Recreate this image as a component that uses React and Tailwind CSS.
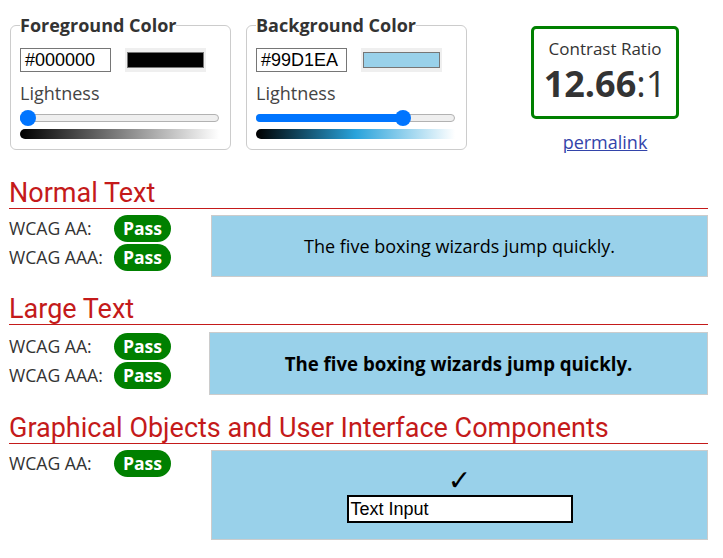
import React from 'react';

const sans = { fontFamily: '"Open Sans", sans-serif' };

const ColorBox = ({ title, hex, swatch, value, gradient }) => {
  const pct = value / 100;
  return (
    <fieldset className="w-[221px] border border-[#cccccc] rounded-[6px] pl-[9px] pr-[11px] pb-[10px]">
      <legend className="text-[18px] leading-[23px] font-bold text-[#333]">{title}</legend>
      <div className="flex items-center mt-[11px] h-[24px]">
        <div className="w-[91px] h-[24px] border border-[#767676] px-[4px] text-[18px] leading-[22px] text-black" style={{ fontFamily: '"Liberation Sans", Arial, sans-serif' }}>
          {hex}
        </div>
        <div className="ml-[14px] w-[81px] h-[24px] bg-[#efefef] flex items-center justify-center">
          <div className="w-[77px] h-[16px] border border-[#767676]" style={{ background: swatch }} />
        </div>
      </div>
      <div className="mt-[9px] text-[18px] leading-[24px] text-[#444]">Lightness</div>
      <div className="relative mt-[5px] h-[16px]">
        <div className="absolute left-0 right-0 top-[4px] h-[8px] rounded-full bg-[#efefef] border border-[#b2b2b2]" />
        <div className="absolute left-0 top-[4px] h-[8px] rounded-full bg-[#0075ff]" style={{ width: `calc(8px + (100% - 16px) * ${pct})` }} />
        <div className="absolute top-0 w-[16px] h-[16px] rounded-full bg-[#0075ff]" style={{ left: `calc((100% - 16px) * ${pct})` }} />
      </div>
      <div className="mt-[3px] h-[10px] rounded-l-[5px]" style={{ background: gradient }} />
    </fieldset>
  );
};

const Badge = () => (
  <span className="inline-flex items-center justify-center w-[57px] h-[27px] rounded-full bg-[#008000] text-white font-bold text-[17.6px] leading-none">
    Pass
  </span>
);

const Row = ({ label }) => (
  <div className="flex items-center h-[27px]">
    <span className="w-[105px] text-[17.6px] text-[#333]">{label}</span>
    <Badge />
  </div>
);

const Heading = ({ children }) => (
  <div>
    <h2 className="text-[27px] leading-[30px] text-[#c41a1a]" style={{ fontFamily: 'Roboto, sans-serif' }}>
      {children}
    </h2>
    <div className="h-[1px] bg-[#c41a1a]" />
  </div>
);

export default function App() {
  return (
    <div className="bg-white w-[723px] h-[558px] overflow-hidden pt-[14px] pl-[9px] pr-[15px]" style={sans}>
      <div className="flex items-start">
        <div className="ml-[1px]">
          <ColorBox
            title="Foreground Color"
            hex="#000000"
            swatch="#000000"
            value={0}
            gradient="linear-gradient(to right, #000000, #ffffff)"
          />
        </div>
        <div className="ml-[15px]">
          <ColorBox
            title="Background Color"
            hex="#99D1EA"
            swatch="#99D1EA"
            value={76}
            gradient="linear-gradient(to right, #000000, #29a3db 50%, #ffffff)"
          />
        </div>
        <div className="ml-[64px] mt-[12px] flex flex-col items-center">
          <div className="w-[148px] h-[93px] border-[3px] border-[#008000] rounded-[5px] flex flex-col items-center pt-[8px] text-[#333]">
            <div className="text-[17px] leading-[23px]">Contrast Ratio</div>
            <div className="text-[36px] leading-[48px]">
              <span className="font-bold">12.66</span>:1
            </div>
          </div>
          <a href="#" className="mt-[11px] text-[18px] leading-[24px] text-[#3344aa] underline">permalink</a>
        </div>
      </div>

      <div className="mt-[24px]">
        <Heading>Normal Text</Heading>
        <div className="flex mt-[6px]">
          <div className="w-[202px] flex flex-col gap-[2px]">
            <Row label="WCAG AA:" />
            <Row label="WCAG AAA:" />
          </div>
          <div className="flex-1 h-[62px] bg-[#99D1EA] border border-[#cccccc] flex items-center justify-center text-[18px] text-black">
            The five boxing wizards jump quickly.
          </div>
        </div>
      </div>

      <div className="mt-[17px]">
        <Heading>Large Text</Heading>
        <div className="flex mt-[7px]">
          <div className="w-[200px] flex flex-col gap-[2px] pt-[1px]">
            <Row label="WCAG AA:" />
            <Row label="WCAG AAA:" />
          </div>
          <div className="flex-1 h-[63px] bg-[#99D1EA] border border-[#cccccc] flex items-center justify-center text-[18.66px] font-bold text-black">
            The five boxing wizards jump quickly.
          </div>
        </div>
      </div>

      <div className="mt-[18px]">
        <Heading>Graphical Objects and User Interface Components</Heading>
        <div className="flex mt-[6px]">
          <div className="w-[202px]">
            <Row label="WCAG AA:" />
          </div>
          <div className="flex-1 h-[90px] bg-[#99D1EA] border border-[#cccccc] flex flex-col items-center pt-[15px]">
            <div className="text-[28px] leading-[29px] font-bold text-black" style={{ fontFamily: '"DejaVu Sans", sans-serif' }}>✓</div>
            <div className="w-[226px] h-[28px] bg-white border-2 border-black px-[2px] text-[18px] leading-[24px] text-black" style={{ fontFamily: '"Liberation Sans", Arial, sans-serif' }}>
              Text Input
            </div>
          </div>
        </div>
      </div>
    </div>
  );
}
